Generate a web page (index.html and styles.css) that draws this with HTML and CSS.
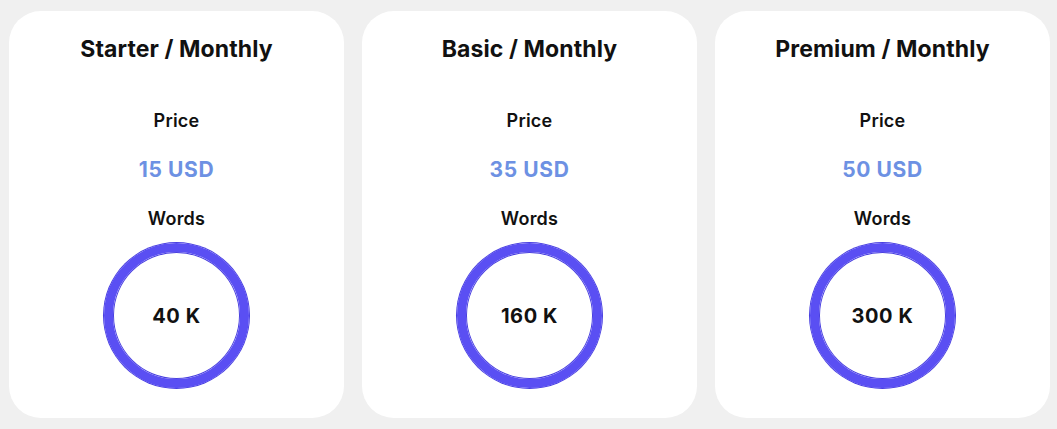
FILE: index.html
```html
<!DOCTYPE html>
<html>
<head>
<meta charset="utf-8">
<link rel="stylesheet" href="styles.css">
</head>
<body>
<div class="plans">
  <div class="card">
    <div class="title">Starter / Monthly</div>
    <div class="label label-price">Price</div>
    <div class="price">15 USD</div>
    <div class="label label-words">Words</div>
    <div class="ring"><span>40 K</span></div>
  </div>
  <div class="card">
    <div class="title">Basic / Monthly</div>
    <div class="label label-price">Price</div>
    <div class="price">35 USD</div>
    <div class="label label-words">Words</div>
    <div class="ring"><span>160 K</span></div>
  </div>
  <div class="card">
    <div class="title">Premium / Monthly</div>
    <div class="label label-price">Price</div>
    <div class="price">50 USD</div>
    <div class="label label-words">Words</div>
    <div class="ring"><span>300 K</span></div>
  </div>
</div>
</body>
</html>
```
FILE: styles.css
```css
html, body {
  margin: 0;
  padding: 0;
  background: #f0f0f0;
}
body {
  font-family: "Inter", "Lato", sans-serif;
  color: #111;
}
.plans {
  display: grid;
  grid-template-columns: repeat(3, 335px);
  gap: 18px;
  padding: 11px 0 0 9px;
}
.card {
  background: #ffffff;
  border-radius: 32px;
  height: 407px;
  box-sizing: border-box;
  padding-top: 25px;
  display: flex;
  flex-direction: column;
  align-items: center;
}
.title {
  font-size: 23px;
  line-height: 26px;
  font-weight: 700;
  letter-spacing: 0.1px;
}
.label {
  font-size: 18px;
  line-height: 22px;
  font-weight: 600;
  letter-spacing: 0.2px;
}
.label-price { margin-top: 48px; }
.price {
  margin-top: 26px;
  font-size: 21px;
  line-height: 24px;
  font-weight: 700;
  letter-spacing: 0.6px;
  color: #6d91e3;
}
.label-words { margin-top: 26px; }
.ring {
  margin-top: 13px;
  width: 145px;
  height: 145px;
  box-sizing: border-box;
  border-radius: 50%;
  border: 9px solid #5a4ff3;
  box-shadow: 0 0 0 1px #4a40e0, inset 0 0 0 1px #4a40e0;
  display: flex;
  align-items: center;
  justify-content: center;
  font-size: 20px;
  font-weight: 700;
  letter-spacing: 0.6px;
}
```
